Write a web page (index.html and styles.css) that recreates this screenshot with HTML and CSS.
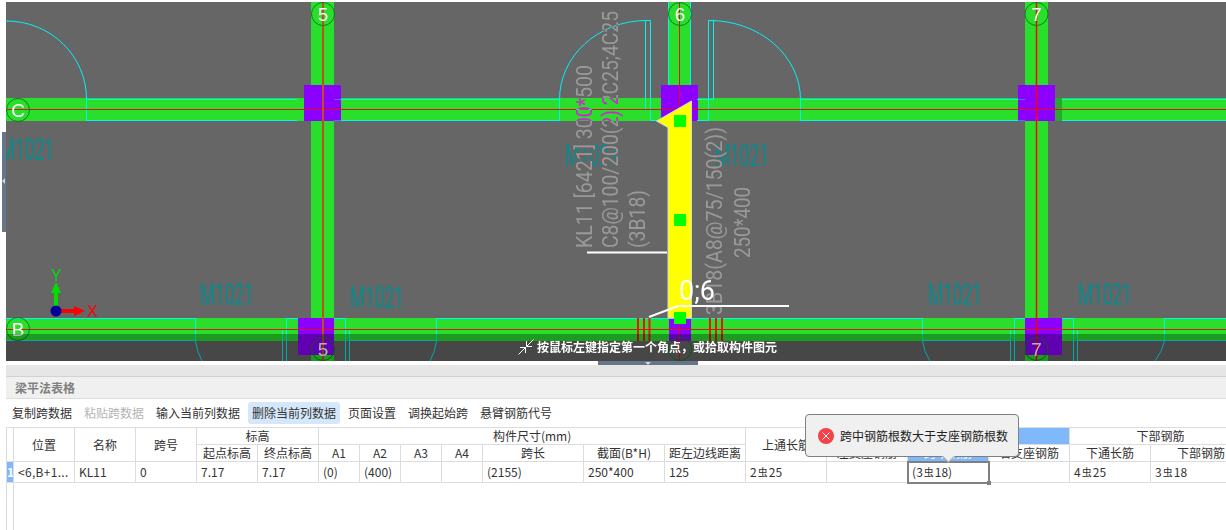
FILE: index.html

```html
<!DOCTYPE html>
<html>
<head>
    <meta charset="UTF-8">
    <title>梁平法表格</title>
    <link rel="stylesheet" href="styles.css">
</head>
<body>
<div class="app">
    <!-- drawing canvas, coordinates are page pixels -->
    <svg class="view" width="1226" height="365" viewBox="0 0 1226 365">
        <defs>
            <clipPath id="canvas-clip"><rect x="6" y="2" width="1220" height="359"/></clipPath>
        </defs>
        <g clip-path="url(#canvas-clip)">
            <rect class="ground" x="6" y="2" width="1220" height="359"/>

            <!-- beams -->
            <rect class="beam" x="6" y="98" width="1220" height="23"/>
            <rect class="beam" x="6" y="318" width="1220" height="23"/>
            <rect class="beam" x="311" y="2" width="23" height="359"/>
            <rect class="beam" x="668" y="2" width="23" height="98"/>
            <rect class="beam" x="1025" y="2" width="23" height="359"/>
            <rect class="beam-dark" x="1055" y="98" width="7" height="23"/>

            <!-- columns -->
            <rect class="col" x="304" y="85" width="37" height="36"/>
            <rect class="col" x="661" y="85" width="37" height="36"/>
            <rect class="col" x="1018" y="85" width="37" height="36"/>
            <rect class="col" x="298" y="318" width="36" height="37"/>
            <rect class="col" x="669" y="318" width="22" height="23"/>
            <rect class="col" x="1025" y="318" width="37" height="37"/>

            <!-- walls and doors -->
            <path class="wall" d="M6 21A80 78 0 0 1 86.5 99.5V120.5H297M86.5 99.5H297"/>
            <path class="wall" d="M334 99.5H559.5V120.5H334"/>
            <path class="wall" d="M559.5 99.5A87 79 0 0 1 645.5 20.5H650.5V120.5H661M645.5 20.5V109.5H650.5"/>
            <path class="wall" d="M668.5 2V85M690.5 2V85"/>
            <path class="wall" d="M697 99.5H713.5V20.5H708.5V120.5H697M708.5 109.5H713.5M708.5 20.5A91 79 0 0 1 800.5 99.5V120.5H1025M800.5 99.5H1025"/>
            <path class="wall" d="M1062 99.5H1226M1062 120.5H1226"/>
            <path class="wall-on-col" d="M334 99.5H341M334 120.5H341M1018 99.5H1025M1018 120.5H1025"/>

            <path class="wall" d="M6 318.5H195.5V340.5H6"/>
            <path class="wall" d="M298 318.5H286.5V329.5H282.5V361M286.5 329.5V361"/>
            <path class="wall" d="M334 318.5H345.5V329.5H349.5V361M345.5 329.5V361"/>
            <path class="wall" d="M349.5 340.5H436.5M436.5 341V318.5H922.5V341M922.5 340.5H1010"/>
            <path class="wall" d="M1025 318.5H1014.5V329.5H1010.5V361M1014.5 329.5V361"/>
            <path class="wall" d="M1062 318.5H1073.5V329.5H1077.5V361M1073.5 329.5V361"/>
            <path class="wall" d="M1077.5 340.5H1164.5M1164.5 341V318.5H1226M1164.5 340.5H1226"/>
            <path class="wall" d="M195.5 341Q197 352 202 361M436.5 341Q435 352 430 361M922.5 341Q924 352 930 361M1164.5 341Q1162 352 1155 361"/>

            <!-- axis lines -->
            <path class="axis" d="M6 109.5H1226M6 329.5H1226M679.5 2V361"/>
            <path class="axis-soft" d="M323 2V361"/>
            <path class="axis-bright" d="M1036.5 2V361"/>

            <!-- axis bubbles -->
            <circle class="bubble" cx="323" cy="14" r="11.5"/>
            <circle class="bubble" cx="680" cy="14" r="11.5"/>
            <circle class="bubble" cx="1036.5" cy="14" r="11.5"/>
            <circle class="bubble" cx="18" cy="110" r="11.5"/>
            <circle class="bubble" cx="18" cy="329" r="11.5"/>
            <circle class="bubble" cx="323" cy="349" r="11.5"/>
            <circle class="bubble" cx="680" cy="349" r="11.5"/>
            <circle class="bubble" cx="1036.5" cy="349" r="11.5"/>
            <text class="bubble-text" x="323" y="21">5</text>
            <text class="bubble-text" x="680" y="21">6</text>
            <text class="bubble-text" x="1036.5" y="21">7</text>
            <text class="bubble-text" x="18" y="116.5">C</text>
            <text class="bubble-text" x="18" y="336">B</text>
            <text class="bubble-text" x="323" y="356">5</text>
            <text class="bubble-text" x="1036.5" y="356">7</text>

            <!-- door marks -->
            <text class="door" x="0" y="160" textLength="54" lengthAdjust="spacingAndGlyphs">M1021</text>
            <text class="door" x="565" y="166" textLength="54" lengthAdjust="spacingAndGlyphs">M1021</text>
            <text class="door" x="715" y="166" textLength="54" lengthAdjust="spacingAndGlyphs">M1021</text>
            <text class="door" x="200" y="305" textLength="54" lengthAdjust="spacingAndGlyphs">M1021</text>
            <text class="door" x="350" y="308" textLength="54" lengthAdjust="spacingAndGlyphs">M1021</text>
            <text class="door" x="928" y="305" textLength="54" lengthAdjust="spacingAndGlyphs">M1021</text>
            <text class="door" x="1078" y="305" textLength="54" lengthAdjust="spacingAndGlyphs">M1021</text>

            <!-- rebar ticks -->
            <path class="tick" d="M638 318V341M644 318V341M649.5 318V341M710 318V341M716 318V341M722 318V341"/>

            <!-- beam labels, xor against whatever is under them -->
            <text class="label" transform="translate(592 248) rotate(-90)" textLength="183" lengthAdjust="spacingAndGlyphs">KL11 [6421] 300*500</text>
            <text class="label" transform="translate(618 248) rotate(-90)" textLength="237" lengthAdjust="spacingAndGlyphs">C8@100/200(2) 2C25;4C25</text>
            <text class="label" transform="translate(645 248) rotate(-90)" textLength="58" lengthAdjust="spacingAndGlyphs">(3B18)</text>
            <text class="label" transform="translate(722 315) rotate(-90)" textLength="188" lengthAdjust="spacingAndGlyphs">3B18(A8@75/150(2))</text>
            <text class="label" transform="translate(750 258) rotate(-90)" textLength="71" lengthAdjust="spacingAndGlyphs">250*400</text>

            <!-- selected beam -->
            <path class="selected" d="M691.5 101V318H668V127.5L656.5 121Z"/>
            <rect class="grip" x="674" y="115" width="12" height="12"/>
            <rect class="grip" x="674" y="214" width="12" height="12"/>
            <rect class="grip" x="674" y="312" width="12" height="12"/>

            <!-- leaders -->
            <path class="leader" d="M587 252.5H667M649 317L678 306H789"/>
            <text class="length" x="679" y="300" textLength="36" lengthAdjust="spacingAndGlyphs">0;6</text>

            <!-- ucs -->
            <path class="ucs-y" d="M56 311V290"/>
            <path class="ucs-y-head" d="M56 282L61 293H51Z"/>
            <path class="ucs-x" d="M56 311H75"/>
            <path class="ucs-x-head" d="M85 311L74 306V316Z"/>
            <circle class="ucs-dot" cx="56" cy="311" r="5.5"/>
            <text class="ucs-y-text" x="56" y="281">Y</text>
            <text class="ucs-x-text" x="92" y="317">X</text>

            <!-- prompt -->
            <rect class="prompt-bg" x="6" y="334" width="1220" height="27"/>
            <path class="prompt-icon" d="M533.5 339.5L526.5 346.5M526.5 341V346.5H532M518.5 354.5L525.5 347.5M520 347.5H525.5V353"/>
            <text class="prompt" x="537" y="352">按鼠标左键指定第一个角点，或拾取构件图元</text>
        </g>
        <!-- collapse handles -->
        <rect class="handle" x="2" y="132" width="4" height="100"/>
        <path class="handle-arrow" d="M2 181L5 178V184Z"/>
        <rect class="handle" x="598" y="361" width="100" height="4"/>
        <path class="handle-arrow" d="M648 365L645 362H651Z"/>
    </svg>

    <div class="split"></div>

    <div class="panel">
        <div class="panel-title">梁平法表格</div>
        <div class="toolbar">
            <span class="tool">复制跨数据</span>
            <span class="tool disabled">粘贴跨数据</span>
            <span class="tool">输入当前列数据</span>
            <span class="tool hover">删除当前列数据</span>
            <span class="tool">页面设置</span>
            <span class="tool">调换起始跨</span>
            <span class="tool">悬臂钢筋代号</span>
        </div>
        <div class="sheet">
            <table class="grid">
                <colgroup>
                    <col class="w-num">
                    <col class="w-61"><col class="w-61"><col class="w-61"><col class="w-61"><col class="w-61">
                    <col class="w-41"><col class="w-41"><col class="w-41"><col class="w-41">
                    <col class="w-101">
                    <col class="w-81"><col class="w-81"><col class="w-81"><col class="w-81"><col class="w-81"><col class="w-81"><col class="w-81">
                    <col class="w-101">
                </colgroup>
                <tr class="head-a">
                    <th rowspan="2"></th>
                    <th rowspan="2">位置</th>
                    <th rowspan="2">名称</th>
                    <th rowspan="2">跨号</th>
                    <th colspan="2">标高</th>
                    <th colspan="7">构件尺寸(mm)</th>
                    <th rowspan="2">上通长筋</th>
                    <th colspan="3" class="picked"></th>
                    <th colspan="2">下部钢筋</th>
                </tr>
                <tr class="head-b">
                    <th>起点标高</th>
                    <th>终点标高</th>
                    <th>A1</th>
                    <th>A2</th>
                    <th>A3</th>
                    <th>A4</th>
                    <th>跨长</th>
                    <th>截面(B*H)</th>
                    <th>距左边线距离</th>
                    <th>左支座钢筋</th>
                    <th class="picked">跨中钢筋</th>
                    <th>右支座钢筋</th>
                    <th>下通长筋</th>
                    <th>下部钢筋</th>
                </tr>
                <tr class="row">
                    <td class="num picked">1</td>
                    <td class="pos">&lt;6,B+1...</td>
                    <td>KL11</td>
                    <td>0</td>
                    <td>7.17</td>
                    <td>7.17</td>
                    <td>(0)</td>
                    <td>(400)</td>
                    <td></td>
                    <td></td>
                    <td>(2155)</td>
                    <td>250*400</td>
                    <td>125</td>
                    <td>2<span class="rebar">虫</span>25</td>
                    <td></td>
                    <td class="active">(3<span class="rebar">虫</span>18)</td>
                    <td></td>
                    <td>4<span class="rebar">虫</span>25</td>
                    <td>3<span class="rebar">虫</span>18</td>
                </tr>
                <tr class="filler">
                    <td class="gutter"></td>
                    <td colspan="18" class="blank"></td>
                </tr>
            </table>
        </div>
    </div>

    <div class="tip">
        <svg class="tip-icon" width="16" height="16" viewBox="0 0 16 16">
            <circle class="tip-dot" cx="8" cy="8" r="8"/>
            <path class="tip-x" d="M4.5 4.5L11.5 11.5M11.5 4.5L4.5 11.5"/>
        </svg>
        <span>跨中钢筋根数大于支座钢筋根数</span>
    </div>
</div>
</body>
</html>
```

FILE: styles.css

```css
html, body {
    margin: 0;
    overflow: hidden;
    background-color: white;
}

.app {
    position: relative;
    width: 1226px;
    height: 530px;
    overflow: hidden;
    font-family: "Noto Sans CJK SC", "Noto Sans", sans-serif;
    font-size: 12px;
    color: #333;
}

.view {
    display: block;
}

/* canvas */
.ground { fill: #666666; }
.beam { fill: #2ade2c; }
.beam-dark { fill: #2aa82e; }
.col { fill: #8b00ff; }
.wall { fill: none; stroke: #00f4f4; stroke-width: 1; }
.wall-on-col { fill: none; stroke: #4a70ff; stroke-width: 1; }
.axis { fill: none; stroke: #e01010; stroke-width: 1; }
.axis-soft { fill: none; stroke: #c0501a; stroke-width: 2; }
.axis-bright { fill: none; stroke: #ff0000; stroke-width: 1.5; }
.tick { fill: none; stroke: #f01010; stroke-width: 2; }

.bubble { fill: none; stroke: #0c7f1a; stroke-width: 1; }
.bubble-text {
    fill: white;
    font-family: "Liberation Sans", sans-serif;
    font-size: 19px;
    text-anchor: middle;
}

.door {
    fill: #0a8a8c;
    font-family: Roboto, "Liberation Sans", sans-serif;
    font-weight: 400;
    font-size: 32px;
}

.label {
    fill: white;
    mix-blend-mode: difference;
    font-family: Roboto, "Liberation Sans", sans-serif;
    font-weight: 400;
    font-size: 22px;
}

.selected { fill: #ffff00; stroke: #c8dce0; stroke-width: 1; }
.grip { fill: #00ff00; }
.leader { fill: none; stroke: white; stroke-width: 2; }
.length {
    fill: white;
    font-family: Roboto, "Liberation Sans", sans-serif;
    font-weight: 400;
    font-size: 28px;
}

.ucs-y { stroke: #00e000; stroke-width: 4; }
.ucs-y-head { fill: #00e000; }
.ucs-x { stroke: #ff0000; stroke-width: 4; }
.ucs-x-head { fill: #ff0000; }
.ucs-dot { fill: #000099; }
.ucs-y-text, .ucs-x-text {
    font-family: "Liberation Sans", sans-serif;
    font-size: 16px;
    text-anchor: middle;
}
.ucs-y-text { fill: #00e000; }
.ucs-x-text { fill: #ff0000; }

.prompt-bg { fill: black; opacity: 0.3; }
.prompt-icon { fill: none; stroke: white; stroke-width: 1; }
.prompt {
    fill: white;
    font-size: 12px;
    font-weight: 700;
}

.handle { fill: #667587; }
.handle-arrow { fill: #d0d4da; }

/* bottom panel */
.split {
    height: 11px;
    background-color: #e6e6e6;
    border-bottom: 1px solid #d2d2d2;
    margin-left: 6px;
}

.panel {
    margin-left: 6px;
    display: flex;
    flex-direction: column;
}

.panel-title {
    height: 21px;
    line-height: 21px;
    padding-left: 9px;
    background-color: #f0f0f0;
    border-bottom: 1px solid #dcdcdc;
    color: #808080;
    font-weight: 700;
}

.toolbar {
    display: flex;
    align-items: center;
    gap: 4px;
    height: 28px;
    padding-left: 2px;
    background-color: white;
}

.tool {
    height: 22px;
    line-height: 22px;
    padding: 0 4px;
    border-radius: 3px;
    color: #333;
}

.tool.disabled { color: #b4b4b4; }
.tool.hover { background-color: #d5e8fb; }

.sheet {
    border-top: 1px solid #dcdcdc;
    border-left: 1px solid #dcdcdc;
    height: 102px;
    overflow: hidden;
}

.grid {
    table-layout: fixed;
    width: 1245px;
    border-collapse: separate;
    border-spacing: 0;
}

.w-num { width: 7px; }
.w-41 { width: 41px; }
.w-61 { width: 61px; }
.w-81 { width: 81px; }
.w-101 { width: 101px; }

.grid th, .grid td {
    box-sizing: border-box;
    padding: 0 4px;
    border-right: 1px solid #dcdcdc;
    border-bottom: 1px solid #dcdcdc;
    overflow: hidden;
    white-space: nowrap;
    font-weight: 400;
    line-height: 16px;
}

.grid th { text-align: center; }
.grid td { text-align: left; }

.head-a, .head-b { height: 17px; }
.row { height: 21px; }
.filler { height: 47px; }

.grid .picked {
    background-color: #7fb8fb;
    color: white;
}

.grid .num {
    padding: 0;
    text-align: center;
    font-weight: 700;
}

.grid .pos { letter-spacing: 0.3px; }

.grid .gutter { padding: 0; border-bottom: 0; }
.grid .blank { border: 0; }

.rebar {
    font-size: 10px;
    margin: 0 1px;
    position: relative;
    top: -1px;
}

.grid .active {
    position: relative;
    overflow: visible;
    outline: 2px solid #808080;
    outline-offset: -1px;
}

.grid .active::after {
    content: "";
    position: absolute;
    right: -3px;
    bottom: -3px;
    width: 4px;
    height: 4px;
    background-color: #808080;
}

/* error tooltip */
.tip {
    position: absolute;
    left: 805px;
    top: 414px;
    box-sizing: border-box;
    width: 214px;
    height: 43px;
    padding-left: 12px;
    display: flex;
    align-items: center;
    gap: 6px;
    background-color: #f0f0f0;
    border: 1px solid #808080;
    border-radius: 4px;
    color: #222;
}

.tip::after {
    content: "";
    position: absolute;
    left: 138px;
    bottom: -5px;
    width: 8px;
    height: 8px;
    background-color: #f0f0f0;
    border-right: 1px solid #a0a0a0;
    border-bottom: 1px solid #a0a0a0;
    transform: rotate(45deg);
}

.tip-icon { flex: none; }
.tip-dot { fill: #f5424a; }
.tip-x { fill: none; stroke: white; stroke-width: 1; }
```
